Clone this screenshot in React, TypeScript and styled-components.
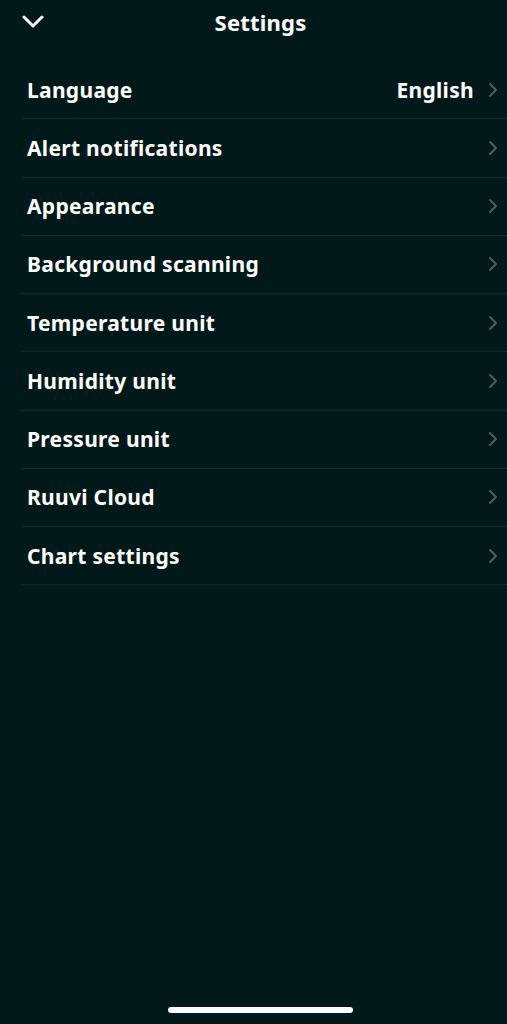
import React from "react";
import styled, { createGlobalStyle } from "styled-components";

const Global = createGlobalStyle`
  html, body { margin: 0; padding: 0; background: #02191a; }
  body { font-family: "Noto Sans", "Open Sans", sans-serif; -webkit-font-smoothing: antialiased; }
`;

const Screen = styled.div`
  width: 507px;
  height: 1024px;
  background: #02191a;
  color: #ffffff;
  display: flex;
  flex-direction: column;
  overflow: hidden;
`;

const Header = styled.header`
  height: 44px;
  display: grid;
  grid-template-columns: 74px 1fr 60px;
  align-items: center;
`;

const BackButton = styled.button`
  background: none;
  border: none;
  padding: 0 0 0 22px;
  height: 44px;
  display: flex;
  align-items: center;
  cursor: pointer;
`;

const Title = styled.h1`
  margin: 0;
  text-align: center;
  font-size: 22px;
  font-weight: 700;
  letter-spacing: 0.2px;
`;

const List = styled.ul`
  list-style: none;
  margin: 17px 0 0 21px;
  padding: 0;
`;

const Row = styled.li`
  height: 58.25px;
  box-sizing: border-box;
  border-bottom: 1.5px solid #0f2a2a;
  display: flex;
  align-items: center;
  padding: 0 9px 0 6px;
`;

const Label = styled.span`
  flex: 1;
  font-size: 21px;
  font-weight: 700;
  letter-spacing: 0.3px;
`;

const Value = styled.span`
  font-size: 21px;
  font-weight: 700;
  letter-spacing: 0.3px;
  margin-right: 14px;
`;

const HomeBar = styled.div`
  margin: auto 0 11px 168px;
  width: 185px;
  height: 6px;
  border-radius: 3px;
  background: #ffffff;
`;

const Chevron = () => (
  <svg width="10" height="16" viewBox="0 0 10 16" fill="none">
    <path d="M2 2l6 6-6 6" stroke="#4b5f60" strokeWidth="2" strokeLinecap="round" strokeLinejoin="round" />
  </svg>
);

const DownIcon = () => (
  <svg width="22" height="14" viewBox="0 0 22 14" fill="none">
    <path d="M2 2l9 9 9-9" stroke="#ffffff" strokeWidth="3" strokeLinecap="round" strokeLinejoin="round" />
  </svg>
);

const items: { label: string; value?: string }[] = [
  { label: "Language", value: "English" },
  { label: "Alert notifications" },
  { label: "Appearance" },
  { label: "Background scanning" },
  { label: "Temperature unit" },
  { label: "Humidity unit" },
  { label: "Pressure unit" },
  { label: "Ruuvi Cloud" },
  { label: "Chart settings" },
];

export default function App() {
  return (
    <>
      <Global />
      <Screen>
        <Header>
          <BackButton aria-label="Close">
            <DownIcon />
          </BackButton>
          <Title>Settings</Title>
          <span />
        </Header>
        <List>
          {items.map((it) => (
            <Row key={it.label}>
              <Label>{it.label}</Label>
              {it.value && <Value>{it.value}</Value>}
              <Chevron />
            </Row>
          ))}
        </List>
        <HomeBar />
      </Screen>
    </>
  );
}
